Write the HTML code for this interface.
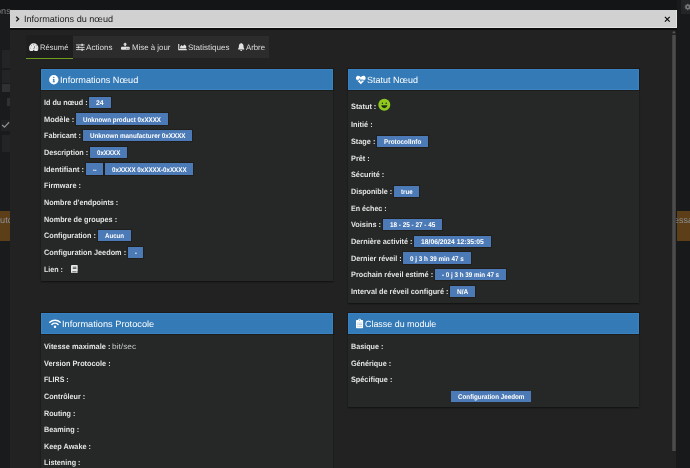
<!DOCTYPE html>
<html lang="fr">
<head>
<meta charset="utf-8">
<title>Informations du nœud</title>
<style>
html,body{margin:0;padding:0;}
body{width:690px;height:468px;overflow:hidden;background:#17191b;position:relative;
 font-family:"Liberation Sans",sans-serif;text-rendering:geometricPrecision;}
#page{position:absolute;left:0;top:0;width:690px;height:468px;overflow:hidden;will-change:transform;}
.b{position:absolute;}
.t{position:absolute;white-space:nowrap;line-height:1;transform-origin:0 0;display:block;font-weight:normal;}
.lb,.bt{font-weight:bold;}
.ic{position:absolute;overflow:visible;}
</style>
</head>
<body>
<div id="page">
 <div class="backdrop">
  <div class="b" style="left:0;top:0;width:690px;height:10px;background:#131517;"></div>
  <div class="b" style="left:0;top:10px;width:10px;height:458px;background:#191b1d;"></div>
  <div class="b" style="left:2px;top:50px;width:8px;height:18px;background:#222426;"></div>
  <div class="b" style="left:2px;top:70px;width:8px;height:13px;background:#222426;"></div>
  <div class="b" style="left:2px;top:84px;width:8px;height:8px;background:#2f3133;"></div>
  <div class="b" style="left:7px;top:98px;width:3px;height:8px;background:#2f3133;"></div>
  <div class="b" style="left:1px;top:120px;width:9px;height:11px;background:#202224;"></div>
  <div class="b" style="left:2px;top:135px;width:8px;height:17px;background:#222426;"></div>
  <div class="b" style="left:0;top:211px;width:10px;height:30px;background:#5c3e18;"></div>
  <div class="b" style="left:677px;top:0;width:13px;height:468px;background:#17191b;"></div>
  <div class="b" style="left:681px;top:0;width:9px;height:14px;background:#232527;"></div>
  <div class="b" style="left:677px;top:211px;width:13px;height:30px;background:#5c3e18;"></div>
  <svg class="ic ic-gear" style="left:684px;top:3px" width="16" height="14" aria-hidden="true"><g transform="translate(0.50 0.70) scale(0.0825)"><circle cx="40" cy="40" r="22" fill="none" stroke="#77797b" stroke-width="16"/><path d="M40 2V78M2 40H78M13 13L67 67M67 13L13 67" stroke="#77797b" stroke-width="13" fill="none"/><circle cx="40" cy="40" r="11" fill="#232527"/></g></svg>
  <svg class="ic ic-check" style="left:1px;top:121px" width="16" height="14" aria-hidden="true"><g transform="translate(0.50 0.50) scale(0.1000)"><path d="M6 34 L30 56 L76 8" fill="none" stroke="#8e8e8e" stroke-width="13"/></g></svg>
  <span id="t61" class="t" style="left:-4.40px;top:7.00px;font-size:9.00px;color:#7e7e7e;transform:scaleX(1.0160);">ons</span>
  <span id="t62" class="t" style="left:-0.30px;top:216.00px;font-size:9.00px;color:#8c9096;transform:scaleX(1.0348);">uto</span>
  <span id="t63" class="t" style="left:674.40px;top:216.00px;font-size:9.00px;color:#8c9096;transform:scaleX(0.9970);">essa</span>
 </div>
 <div class="modal-dialog" role="dialog" aria-label="Informations du nœud">
  <div class="b modal-bg" style="left:10px;top:10px;width:666px;height:458px;background:#222222;"></div>
  <div class="modal-header">
   <div class="b titlebar" style="left:10px;top:10px;width:667px;height:18px;background:#d1d1d1;box-shadow:inset -1px -1px 0 #e2e2e2;"></div>
   <div class="b titlebar-border" style="left:10px;top:28px;width:667px;height:2px;background:#0e0e0e;"></div>
   <svg class="ic ic-chevron" style="left:15px;top:16px" width="16" height="14" aria-hidden="true"><g transform="translate(0.40 0.20) scale(0.1000)"><path d="M8 6 L32 28 L8 50" fill="none" stroke="#1c1c1c" stroke-width="13"/></g></svg>
   <span id="t60" class="t mt" style="left:24.40px;top:15.00px;font-size:9.00px;color:#1c1c1c;transform:scaleX(1.0118);">Informations du nœud</span>
   <svg class="ic ic-close" style="left:664px;top:16px" width="16" height="14" aria-hidden="true"><g transform="translate(0.30 0.30) scale(0.1000)"><path d="M6 6 L54 54 M54 6 L6 54" fill="none" stroke="#0a0a0a" stroke-width="11.5"/></g></svg>
  </div>
  <div class="scrollbar">
   <div class="b thumb" style="left:672px;top:35px;width:4px;height:416px;background:linear-gradient(to right,#3b3b3b,#4d4d4d 40%,#4d4d4d 60%,#3b3b3b);"></div>
   <svg class="ic ic-scrollup" style="left:672px;top:30px" width="16" height="14" aria-hidden="true"><g transform="translate(0.20 0.80) scale(0.1000)"><path d="M0 24 L17 0 L34 24 Z" fill="#5a5a5a"/></g></svg>
  </div>
  <div class="nav-tabs" role="tablist">
   <div class="b tabs-bg" style="left:73px;top:36px;width:196px;height:22px;background:#2c2c2c;"></div>
   <div class="b tab-active-bg" style="left:26px;top:35px;width:47px;height:23px;background:#1e1e1e;"></div>
   <div class="b tab-active-line" style="left:26px;top:58px;width:47px;height:1px;background:#6f9c1c;"></div>
   <div class="tab active" role="tab">
    <svg class="ic ic-tachometer" style="left:29px;top:43px" width="16" height="14" aria-hidden="true"><g transform="translate(0.00 0.30) scale(0.1000)"><path d="M47 0 A47 47 0 0 1 94 47 C94 58 91 67 86 74 C85 77 82 78 79 78 H15 C12 78 9 77 8 74 C3 67 0 58 0 47 A47 47 0 0 1 47 0 Z" fill="#e8e8e8"/><g fill="#1e1e1e" opacity=".8"><circle cx="47" cy="14" r="4.500"/><circle cx="23" cy="25" r="4.500"/><circle cx="71" cy="25" r="4.500"/><circle cx="14" cy="48" r="4.500"/><circle cx="80" cy="48" r="4.500"/><path d="M41 66 A8 8 0 1 0 53 66 Z"/><path d="M44.500 58 L56 27 L60.500 28.500 L50.500 60 Z"/></g></g></svg>
    <span id="t55" class="t tt" style="left:40.30px;top:44.00px;font-size:7.85px;color:#dddddd;transform:scaleX(0.9729);">Résumé</span>
   </div>
   <div class="tab" role="tab">
    <svg class="ic ic-sliders" style="left:76px;top:43px" width="16" height="14" aria-hidden="true"><g transform="translate(0.00 0.80) scale(0.1000)"><g fill="#e2e2e2"><rect x="0" y="7" width="86" height="9"/><rect x="0" y="30.500" width="86" height="9"/><rect x="0" y="54" width="86" height="9"/><rect x="54" y="0" width="14" height="23" rx="3"/><rect x="18" y="23.500" width="14" height="23" rx="3"/><rect x="54" y="47" width="14" height="23" rx="3"/></g></g></svg>
    <span id="t56" class="t tt" style="left:86.30px;top:44.00px;font-size:7.85px;color:#dddddd;transform:scaleX(1.0325);">Actions</span>
   </div>
   <div class="tab" role="tab">
    <svg class="ic ic-update" style="left:121px;top:42px" width="16" height="14" aria-hidden="true"><g transform="translate(0.00 0.50) scale(0.1000)"><g fill="#e2e2e2"><path d="M0 50 C0 45 3 42 8 42 H79 C84 42 87 45 87 50 V65 C87 70 84 73 79 73 H8 C3 73 0 70 0 65 Z"/><path d="M41 0 L62 21 H49 V37 H33 V21 H20 Z"/></g><circle cx="71" cy="58" r="4.500" fill="#2c2c2c"/><circle cx="57" cy="58" r="4.500" fill="#2c2c2c"/></g></svg>
    <span id="t57" class="t tt" style="left:132.20px;top:44.00px;font-size:7.85px;color:#dddddd;transform:scaleX(1.0028);">Mise à jour</span>
   </div>
   <div class="tab" role="tab">
    <svg class="ic ic-chart" style="left:178px;top:44px" width="16" height="14" aria-hidden="true"><g transform="translate(0.20 0.00) scale(0.1000)"><g fill="#e2e2e2"><path d="M0 0 H11 V51 H86 V62 H0 Z"/><path d="M19 44 V27 L33 9 L47 23 L61 5 L80 21 V44 Z"/></g></g></svg>
    <span id="t58" class="t tt" style="left:188.30px;top:44.00px;font-size:7.85px;color:#dddddd;transform:scaleX(1.0233);">Statistiques</span>
   </div>
   <div class="tab" role="tab">
    <svg class="ic ic-bell" style="left:238px;top:43px" width="16" height="14" aria-hidden="true"><g transform="translate(0.00 0.00) scale(0.1000)"><g fill="#e2e2e2"><path d="M32 0 C36 0 38 3 38 6 C50 9 55 19 55 30 C55 45 58 52 63 57 C66 61 63 66 59 66 H5 C1 66 -2 61 1 57 C6 52 9 45 9 30 C9 19 14 9 26 6 C26 3 28 0 32 0 Z"/><path d="M22 70 H42 A10 10 0 0 1 22 70 Z"/></g></g></svg>
    <span id="t59" class="t tt" style="left:245.70px;top:44.00px;font-size:7.85px;color:#dddddd;transform:scaleX(0.9871);">Arbre</span>
   </div>
  </div>
  <div class="tab-content">
   <section class="panel panel-primary" id="panel-info">
    <div class="b panel-body" style="left:41px;top:90px;width:292px;height:191px;background:#262828;box-shadow:0 1px 1.5px rgba(0,0,0,.55);"></div>
    <div class="b panel-heading" style="left:41px;top:69px;width:292px;height:21px;background:#337ab7;box-shadow:inset 0 0 0 1px rgba(70,150,225,.28),0 0 0 1px rgba(22,12,4,.4);"></div>
    <svg class="ic ic-info" style="left:49px;top:75px" width="16" height="14" aria-hidden="true"><g transform="translate(0.10 0.00) scale(0.1000)"><circle cx="47" cy="47" r="47" fill="#ffffff"/><g fill="#337ab7"><circle cx="47" cy="25" r="7"/><path d="M37 41 H53 V66 H58 V73 H36 V66 H41 V48 H37 Z"/></g></g></svg>
    <span id="t19" class="t pt" style="left:60.20px;top:76.00px;font-size:9.00px;color:#ffffff;transform:scaleX(1.0160);">Informations Nœud</span>
    <div class="form-row">
     <label id="t0" class="t lb" style="left:43.80px;top:99.00px;font-size:7.78px;color:#e2e2e2;transform:scaleX(0.9260);">Id du nœud :</label>
     <div class="wrap-label-primary">
      <div class="b label label-primary" style="left:89px;top:97px;width:22px;height:11px;background:#4b7ab6;box-shadow:0 0 0 1px rgba(20,12,4,.3);"></div>
      <span id="t1" class="t bt" style="left:96.25px;top:101.00px;font-size:6.80px;color:#ffffff;transform:scaleX(1.0050);">24</span>
     </div>
    </div>
    <div class="form-row">
     <label id="t2" class="t lb" style="left:43.80px;top:116.00px;font-size:7.78px;color:#e2e2e2;transform:scaleX(0.9590);">Modèle :</label>
     <div class="wrap-label-primary">
      <div class="b label label-primary" style="left:76px;top:113px;width:92px;height:12px;background:#4b7ab6;box-shadow:0 0 0 1px rgba(20,12,4,.3);"></div>
      <span id="t3" class="t bt" style="left:82.95px;top:118.00px;font-size:6.80px;color:#ffffff;transform:scaleX(0.9132);">Unknown product 0xXXXX</span>
     </div>
    </div>
    <div class="form-row">
     <label id="t4" class="t lb" style="left:43.80px;top:132.00px;font-size:7.78px;color:#e2e2e2;transform:scaleX(0.9305);">Fabricant :</label>
     <div class="wrap-label-primary">
      <div class="b label label-primary" style="left:83px;top:130px;width:109px;height:11px;background:#4b7ab6;box-shadow:0 0 0 1px rgba(20,12,4,.3);"></div>
      <span id="t5" class="t bt" style="left:89.60px;top:134.00px;font-size:6.80px;color:#ffffff;transform:scaleX(0.9232);">Unknown manufacturer 0xXXXX</span>
     </div>
    </div>
    <div class="form-row">
     <label id="t6" class="t lb" style="left:43.80px;top:149.00px;font-size:7.78px;color:#e2e2e2;transform:scaleX(0.9311);">Description :</label>
     <div class="wrap-label-primary">
      <div class="b label label-primary" style="left:90px;top:147px;width:37px;height:11px;background:#4b7ab6;box-shadow:0 0 0 1px rgba(20,12,4,.3);"></div>
      <span id="t7" class="t bt" style="left:96.85px;top:151.00px;font-size:6.80px;color:#ffffff;transform:scaleX(0.9065);">0xXXXX</span>
     </div>
    </div>
    <div class="form-row">
     <label id="t8" class="t lb" style="left:43.80px;top:166.00px;font-size:7.78px;color:#e2e2e2;transform:scaleX(0.9545);">Identifiant :</label>
     <div class="wrap-label-primary">
      <div class="b label label-primary" style="left:86px;top:163px;width:17px;height:12px;background:#4b7ab6;box-shadow:0 0 0 1px rgba(20,12,4,.3);"></div>
      <span id="t9" class="t bt" style="left:92.85px;top:168.00px;font-size:6.80px;color:#ffffff;transform:scaleX(0.7834);">--</span>
     </div>
     <div class="wrap-label-primary">
      <div class="b label label-primary" style="left:105px;top:163px;width:88px;height:12px;background:#4b7ab6;box-shadow:0 0 0 1px rgba(20,12,4,.3);"></div>
      <span id="t10" class="t bt" style="left:111.85px;top:168.00px;font-size:6.80px;color:#ffffff;transform:scaleX(0.9177);">0xXXXX 0xXXXX-0xXXXX</span>
     </div>
    </div>
    <div class="form-row">
     <label id="t11" class="t lb" style="left:43.80px;top:182.00px;font-size:7.78px;color:#e2e2e2;transform:scaleX(0.9394);">Firmware :</label>
    </div>
    <div class="form-row">
     <label id="t12" class="t lb" style="left:43.80px;top:199.00px;font-size:7.78px;color:#e2e2e2;transform:scaleX(0.9290);">Nombre d'endpoints :</label>
    </div>
    <div class="form-row">
     <label id="t13" class="t lb" style="left:43.80px;top:216.00px;font-size:7.78px;color:#e2e2e2;transform:scaleX(0.9357);">Nombre de groupes :</label>
    </div>
    <div class="form-row">
     <label id="t14" class="t lb" style="left:43.80px;top:232.00px;font-size:7.78px;color:#e2e2e2;transform:scaleX(0.9319);">Configuration :</label>
     <div class="wrap-label-primary">
      <div class="b label label-primary" style="left:98px;top:230px;width:33px;height:11px;background:#4b7ab6;box-shadow:0 0 0 1px rgba(20,12,4,.3);"></div>
      <span id="t15" class="t bt" style="left:104.85px;top:234.00px;font-size:6.80px;color:#ffffff;transform:scaleX(0.9004);">Aucun</span>
     </div>
    </div>
    <div class="form-row">
     <label id="t16" class="t lb" style="left:43.80px;top:249.00px;font-size:7.78px;color:#e2e2e2;transform:scaleX(0.9418);">Configuration Jeedom :</label>
     <div class="wrap-label-primary">
      <div class="b label label-primary" style="left:128px;top:247px;width:15px;height:11px;background:#4b7ab6;box-shadow:0 0 0 1px rgba(20,12,4,.3);"></div>
      <span id="t17" class="t bt" style="left:134.60px;top:251.00px;font-size:6.80px;color:#ffffff;transform:scaleX(0.7945);">-</span>
     </div>
    </div>
    <div class="form-row">
     <label id="t18" class="t lb" style="left:43.80px;top:266.00px;font-size:7.78px;color:#e2e2e2;transform:scaleX(0.9157);">Lien :</label>
     <svg class="ic ic-book" style="left:71px;top:265px" width="16" height="14" aria-hidden="true"><g transform="translate(0.00 0.00) scale(0.1000)"><path d="M12 0 H61 C65 0 67 2 67 6 V60 C67 63 66 64 64 65 V76 C66 77 67 78 67 79 C67 80.500 66 81 64 81 H12 C5 81 0 76 0 69 V12 C0 5 5 0 12 0 Z" fill="#e8e8e8"/><g fill="#262828"><rect x="18" y="18" width="36" height="7"/><rect x="18" y="32" width="36" height="7"/><rect x="12" y="66" width="44" height="7" rx="3"/></g></g></svg>
    </div>
   </section>
   <section class="panel panel-primary" id="panel-status">
    <div class="b panel-body" style="left:348px;top:90px;width:291px;height:213px;background:#262828;box-shadow:0 1px 1.5px rgba(0,0,0,.55);"></div>
    <div class="b panel-heading" style="left:348px;top:69px;width:291px;height:21px;background:#337ab7;box-shadow:inset 0 0 0 1px rgba(70,150,225,.28),0 0 0 1px rgba(22,12,4,.4);"></div>
    <svg class="ic ic-heartbeat" style="left:355px;top:75px" width="16" height="14" aria-hidden="true"><g transform="translate(0.90 0.70) scale(0.1000)"><path d="M49 86 L7 43 C-3 32 -2 15 9 6 C19 -2 33 0 42 9 L49 16 L56 9 C65 0 79 -2 89 6 C100 15 101 32 91 43 Z" fill="#ffffff"/><path d="M2 46 H30 L38 30 L50 58 L60 38 L65 46 H96" fill="none" stroke="#337ab7" stroke-width="8" stroke-linejoin="round"/></g></svg>
    <span id="t39" class="t pt" style="left:367.40px;top:76.00px;font-size:9.00px;color:#ffffff;transform:scaleX(0.9974);">Statut Nœud</span>
    <div class="form-row">
     <label id="t20" class="t lb" style="left:350.80px;top:103.00px;font-size:7.78px;color:#e2e2e2;transform:scaleX(0.9469);">Statut :</label>
     <svg class="ic ic-smiley" style="left:378px;top:98px" width="16" height="14" aria-hidden="true"><g transform="translate(0.30 0.75) scale(0.1000)"><circle cx="60" cy="60" r="60" fill="#90c91e"/><g fill="#1f2b18"><circle cx="41" cy="44" r="7.500"/><circle cx="79" cy="44" r="7.500"/><path d="M30 66 H90 C88 84 76 94 60 94 C44 94 32 84 30 66 Z"/></g></g></svg>
    </div>
    <div class="form-row">
     <label id="t21" class="t lb" style="left:350.80px;top:121.00px;font-size:7.78px;color:#e2e2e2;transform:scaleX(0.9496);">Initié :</label>
    </div>
    <div class="form-row">
     <label id="t22" class="t lb" style="left:350.80px;top:138.00px;font-size:7.78px;color:#e2e2e2;transform:scaleX(0.9411);">Stage :</label>
     <div class="wrap-label-primary">
      <div class="b label label-primary" style="left:377px;top:136px;width:51px;height:11px;background:#4b7ab6;box-shadow:0 0 0 1px rgba(20,12,4,.3);"></div>
      <span id="t23" class="t bt" style="left:383.85px;top:140.00px;font-size:6.80px;color:#ffffff;transform:scaleX(0.9318);">ProtocolInfo</span>
     </div>
    </div>
    <div class="form-row">
     <label id="t24" class="t lb" style="left:350.80px;top:155.00px;font-size:7.78px;color:#e2e2e2;transform:scaleX(0.9446);">Prêt :</label>
    </div>
    <div class="form-row">
     <label id="t25" class="t lb" style="left:350.80px;top:171.00px;font-size:7.78px;color:#e2e2e2;transform:scaleX(0.9403);">Sécurité :</label>
    </div>
    <div class="form-row">
     <label id="t26" class="t lb" style="left:350.80px;top:188.00px;font-size:7.78px;color:#e2e2e2;transform:scaleX(0.9251);">Disponible :</label>
     <div class="wrap-label-primary">
      <div class="b label label-primary" style="left:394px;top:186px;width:25px;height:11px;background:#4b7ab6;box-shadow:0 0 0 1px rgba(20,12,4,.3);"></div>
      <span id="t27" class="t bt" style="left:400.85px;top:190.00px;font-size:6.80px;color:#ffffff;transform:scaleX(0.8993);">true</span>
     </div>
    </div>
    <div class="form-row">
     <label id="t28" class="t lb" style="left:350.80px;top:205.00px;font-size:7.78px;color:#e2e2e2;transform:scaleX(0.9189);">En échec :</label>
    </div>
    <div class="form-row">
     <label id="t29" class="t lb" style="left:350.80px;top:221.00px;font-size:7.78px;color:#e2e2e2;transform:scaleX(0.9415);">Voisins :</label>
     <div class="wrap-label-primary">
      <div class="b label label-primary" style="left:383px;top:219px;width:59px;height:11px;background:#4b7ab6;box-shadow:0 0 0 1px rgba(20,12,4,.3);"></div>
      <span id="t30" class="t bt" style="left:389.60px;top:223.00px;font-size:6.80px;color:#ffffff;transform:scaleX(0.9364);">18 - 25 - 27 - 45</span>
     </div>
    </div>
    <div class="form-row">
     <label id="t31" class="t lb" style="left:350.80px;top:238.00px;font-size:7.78px;color:#e2e2e2;transform:scaleX(0.9440);">Dernière activité :</label>
     <div class="wrap-label-primary">
      <div class="b label label-primary" style="left:414px;top:236px;width:77px;height:11px;background:#4b7ab6;box-shadow:0 0 0 1px rgba(20,12,4,.3);"></div>
      <span id="t32" class="t bt" style="left:420.85px;top:240.00px;font-size:6.80px;color:#ffffff;transform:scaleX(0.9949);">18/06/2024 12:35:05</span>
     </div>
    </div>
    <div class="form-row">
     <label id="t33" class="t lb" style="left:350.80px;top:255.00px;font-size:7.78px;color:#e2e2e2;transform:scaleX(0.9338);">Dernier réveil :</label>
     <div class="wrap-label-primary">
      <div class="b label label-primary" style="left:403px;top:252px;width:68px;height:12px;background:#4b7ab6;box-shadow:0 0 0 1px rgba(20,12,4,.3);"></div>
      <span id="t34" class="t bt" style="left:409.85px;top:257.00px;font-size:6.80px;color:#ffffff;transform:scaleX(0.9306);">0 j 3 h 39 min 47 s</span>
     </div>
    </div>
    <div class="form-row">
     <label id="t35" class="t lb" style="left:350.80px;top:271.00px;font-size:7.78px;color:#e2e2e2;transform:scaleX(0.9420);">Prochain réveil estimé :</label>
     <div class="wrap-label-primary">
      <div class="b label label-primary" style="left:435px;top:269px;width:71px;height:11px;background:#4b7ab6;box-shadow:0 0 0 1px rgba(20,12,4,.3);"></div>
      <span id="t36" class="t bt" style="left:441.85px;top:273.00px;font-size:6.80px;color:#ffffff;transform:scaleX(0.9214);">- 0 j 3 h 39 min 47 s</span>
     </div>
    </div>
    <div class="form-row">
     <label id="t37" class="t lb" style="left:350.80px;top:288.00px;font-size:7.78px;color:#e2e2e2;transform:scaleX(0.9413);">Interval de réveil configuré :</label>
     <div class="wrap-label-primary">
      <div class="b label label-primary" style="left:450px;top:286px;width:25px;height:11px;background:#4b7ab6;box-shadow:0 0 0 1px rgba(20,12,4,.3);"></div>
      <span id="t38" class="t bt" style="left:456.85px;top:290.00px;font-size:6.80px;color:#ffffff;transform:scaleX(0.9643);">N/A</span>
     </div>
    </div>
   </section>
   <section class="panel panel-primary" id="panel-protocol">
    <div class="b panel-body" style="left:41px;top:334px;width:292px;height:146px;background:#262828;box-shadow:0 1px 1.5px rgba(0,0,0,.55);"></div>
    <div class="b panel-heading" style="left:41px;top:313px;width:292px;height:21px;background:#337ab7;box-shadow:inset 0 0 0 1px rgba(70,150,225,.28),0 0 0 1px rgba(22,12,4,.4);"></div>
    <svg class="ic ic-wifi" style="left:49px;top:319px" width="16" height="14" aria-hidden="true"><g transform="translate(0.00 0.20) scale(0.1000)"><g fill="none" stroke="#ffffff" stroke-width="15" stroke-linecap="round"><path d="M8 31 A76 76 0 0 1 112 31"/><path d="M29 53 A44 44 0 0 1 91 53"/></g><circle cx="60" cy="76" r="12.500" fill="#fff"/></g></svg>
    <span id="t49" class="t pt" style="left:62.20px;top:320.00px;font-size:9.00px;color:#ffffff;transform:scaleX(1.0239);">Informations Protocole</span>
    <div class="form-row">
     <label id="t41" class="t lb" style="left:43.80px;top:343.00px;font-size:7.78px;color:#e2e2e2;transform:scaleX(0.9568);">Vitesse maximale :</label>
     <span id="t40" class="t val" style="left:112.00px;top:343.00px;font-size:7.78px;color:#c8c8c8;transform:scaleX(1.0791);">bit/sec</span>
    </div>
    <div class="form-row">
     <label id="t42" class="t lb" style="left:43.80px;top:360.00px;font-size:7.78px;color:#e2e2e2;transform:scaleX(0.9413);">Version Protocole :</label>
    </div>
    <div class="form-row">
     <label id="t43" class="t lb" style="left:43.80px;top:376.00px;font-size:7.78px;color:#e2e2e2;transform:scaleX(0.9060);">FLIRS :</label>
    </div>
    <div class="form-row">
     <label id="t44" class="t lb" style="left:43.80px;top:393.00px;font-size:7.78px;color:#e2e2e2;transform:scaleX(0.9268);">Contrôleur :</label>
    </div>
    <div class="form-row">
     <label id="t45" class="t lb" style="left:43.80px;top:410.00px;font-size:7.78px;color:#e2e2e2;transform:scaleX(0.9199);">Routing :</label>
    </div>
    <div class="form-row">
     <label id="t46" class="t lb" style="left:43.80px;top:426.00px;font-size:7.78px;color:#e2e2e2;transform:scaleX(0.9342);">Beaming :</label>
    </div>
    <div class="form-row">
     <label id="t47" class="t lb" style="left:43.80px;top:443.00px;font-size:7.78px;color:#e2e2e2;transform:scaleX(0.9384);">Keep Awake :</label>
    </div>
    <div class="form-row">
     <label id="t48" class="t lb" style="left:43.80px;top:459.00px;font-size:7.78px;color:#e2e2e2;transform:scaleX(0.9288);">Listening :</label>
    </div>
   </section>
   <section class="panel panel-primary" id="panel-class">
    <div class="b panel-body" style="left:348px;top:334px;width:291px;height:73px;background:#262828;box-shadow:0 1px 1.5px rgba(0,0,0,.55);"></div>
    <div class="b panel-heading" style="left:348px;top:313px;width:291px;height:21px;background:#337ab7;box-shadow:inset 0 0 0 1px rgba(70,150,225,.28),0 0 0 1px rgba(22,12,4,.4);"></div>
    <svg class="ic ic-clipboard" style="left:356px;top:318px" width="16" height="14" aria-hidden="true"><g transform="translate(0.00 0.70) scale(0.1000)"><path d="M8 12 H22 C22 5 28 0 35.500 0 C43 0 49 5 49 12 H63 C68 12 71 15 71 20 V88 C71 93 68 96 63 96 H8 C3 96 0 93 0 88 V20 C0 15 3 12 8 12 Z" fill="#ffffff"/><circle cx="35.500" cy="12" r="5" fill="#337ab7"/><g fill="#9dbfde"><rect x="24" y="40" width="36" height="7"/><rect x="24" y="56" width="36" height="7"/><rect x="24" y="72" width="36" height="7"/><rect x="10" y="40" width="8" height="7"/><rect x="10" y="56" width="8" height="7"/><rect x="10" y="72" width="8" height="7"/></g></g></svg>
    <span id="t54" class="t pt" style="left:365.10px;top:320.00px;font-size:9.00px;color:#ffffff;transform:scaleX(0.9896);">Classe du module</span>
    <div class="form-row">
     <label id="t50" class="t lb" style="left:350.80px;top:343.00px;font-size:7.78px;color:#e2e2e2;transform:scaleX(0.9239);">Basique :</label>
    </div>
    <div class="form-row">
     <label id="t51" class="t lb" style="left:350.80px;top:360.00px;font-size:7.78px;color:#e2e2e2;transform:scaleX(0.9283);">Générique :</label>
    </div>
    <div class="form-row">
     <label id="t52" class="t lb" style="left:350.80px;top:376.00px;font-size:7.78px;color:#e2e2e2;transform:scaleX(0.9387);">Spécifique :</label>
    </div>
    <div class="form-row">
     <div class="wrap-btn-xs">
      <div class="b btn btn-primary btn-xs" style="left:451px;top:391px;width:80px;height:11px;background:#4b7ab6;"></div>
      <span id="t53" class="t bt" style="left:457.90px;top:395.00px;font-size:6.80px;color:#fff;transform:scaleX(0.9206);">Configuration Jeedom</span>
     </div>
    </div>
   </section>
  </div>
 </div>
</div>
</body>
</html>
